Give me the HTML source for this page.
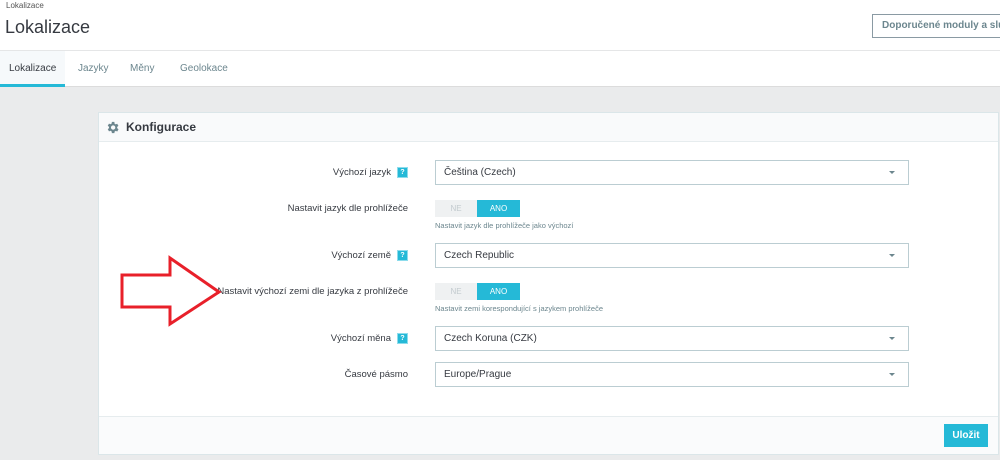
<!DOCTYPE html>
<html><head><meta charset="utf-8"><style>
*{box-sizing:border-box;margin:0;padding:0}
body{width:1000px;height:460px;overflow:hidden;background:#eaebec;font-family:"Liberation Sans",sans-serif;color:#363a41;position:relative}
.hdr{position:absolute;left:0;top:0;width:1000px;height:51px;background:#fff;border-bottom:1px solid #e5e6e7}
.bc{position:absolute;left:6px;top:1px;font-size:8px;color:#555}
.h1{position:absolute;left:5px;top:17px;font-size:18px;color:#363a41}
.btn{position:absolute;left:872px;top:14px;width:140px;height:24px;border:1px solid #8a9aa3;font-size:10px;font-weight:bold;color:#6c868e;padding:5px 9px;white-space:nowrap;background:#fff}
.tabs{position:absolute;left:0;top:51px;width:1000px;height:36px;background:#fff;border-bottom:1px solid #dcdcdc}
.tab{position:absolute;top:0;height:36px;line-height:36px;font-size:10px;color:#6c868e}
.tab.a{background:#f6f9fb;color:#363a41;border-bottom:3px solid #25b9d7;left:0;width:65px;padding-left:9px}
.panel{position:absolute;left:98px;top:112px;width:901px;height:343px;background:#fff;border:1px solid #dbe6e9}
.ph{height:29px;background:#f9fafb;border-bottom:1px solid #e6ecee;font-size:12px;font-weight:bold;padding:7px 0 0 27px;color:#363a41}
.pf{position:absolute;left:0;bottom:0;width:899px;height:38px;background:#fafbfc;border-top:1px solid #e6ecee}
.save{position:absolute;right:10px;top:7px;width:44px;height:23px;background:#25b9d7;color:#fff;font-size:10px;font-weight:bold;text-align:center;line-height:23px}
.lbl{position:absolute;right:592px;font-size:9.5px;color:#363a41;white-space:nowrap}
.q{display:inline-block;width:11px;height:11px;background:#25b9d7;border:1px solid #8ddcec;vertical-align:middle;margin-left:6px;color:#fff;font-size:7px;line-height:9px;text-align:center;font-weight:bold}
.sel{position:absolute;left:435px;width:474px;height:25px;border:1px solid #bbcdd2;background:#fff;font-size:10px;padding:6px 8px}
.sel:after{content:"";position:absolute;right:13px;top:10px;border:3px solid transparent;border-top:3px solid #6c868e}
.sw{position:absolute;left:435px;width:85px;height:17px;font-size:8px}
.sw .ne{position:absolute;left:0;top:0;width:42px;height:17px;background:#eff1f2;color:#c3cbcf;text-align:center;line-height:17px}
.sw .ano{position:absolute;left:42px;top:0;width:43px;height:17px;background:#25b9d7;color:#fff;text-align:center;line-height:17px}
.hint{position:absolute;left:435px;font-size:7.5px;color:#6c868e}
</style></head><body>
<div class="hdr"><div class="bc">Lokalizace</div><div class="h1">Lokalizace</div><div class="btn">Doporučené moduly a služby</div></div>
<div class="tabs"><div class="tab a">Lokalizace</div><div class="tab" style="left:78px">Jazyky</div><div class="tab" style="left:130px">Měny</div><div class="tab" style="left:180px">Geolokace</div></div>
<div class="panel"><div class="ph">Konfigurace</div>
<svg style="position:absolute;left:6px;top:7px" width="15" height="15" viewBox="0 0 24 24"><path fill="#6c868e" d="M19.4 13a7.5 7.5 0 0 0 0-2l2.1-1.6-2-3.5-2.5 1a7 7 0 0 0-1.7-1L15 3h-4l-.4 2.7a7 7 0 0 0-1.7 1l-2.5-1-2 3.5L6.5 11a7.5 7.5 0 0 0 0 2l-2.1 1.6 2 3.5 2.5-1a7 7 0 0 0 1.7 1L11 21h4l.4-2.7a7 7 0 0 0 1.7-1l2.5 1 2-3.5zM13 15.5a3.5 3.5 0 1 1 0-7 3.5 3.5 0 0 1 0 7z"/></svg>
<div class="pf"><div class="save">Uložit</div></div></div>
<div class="lbl" style="top:167px">Výchozí jazyk<span class="q">?</span></div>
<div class="sel" style="top:160px">Čeština (Czech)</div>
<div class="lbl" style="top:203px">Nastavit jazyk dle prohlížeče</div>
<div class="sw" style="top:200px"><div class="ne">NE</div><div class="ano">ANO</div></div>
<div class="hint" style="top:221px">Nastavit jazyk dle prohlížeče jako výchozí</div>
<div class="lbl" style="top:250px">Výchozí země<span class="q">?</span></div>
<div class="sel" style="top:243px">Czech Republic</div>
<div class="lbl" style="top:286px">Nastavit výchozí zemi dle jazyka z prohlížeče</div>
<div class="sw" style="top:283px"><div class="ne">NE</div><div class="ano">ANO</div></div>
<div class="hint" style="top:304px">Nastavit zemi korespondující s jazykem prohlížeče</div>
<div class="lbl" style="top:333px">Výchozí měna<span class="q">?</span></div>
<div class="sel" style="top:326px">Czech Koruna (CZK)</div>
<div class="lbl" style="top:369px">Časové pásmo</div>
<div class="sel" style="top:362px">Europe/Prague</div>
<svg style="position:absolute;left:0;top:0" width="1000" height="460"><polygon points="122,275 170,275 170,258 219,292 170,324 170,307 122,307" fill="none" stroke="#e8202a" stroke-width="3"/></svg>
</body></html>
